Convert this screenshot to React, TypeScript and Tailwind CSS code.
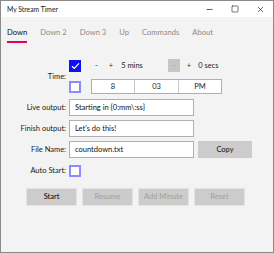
import { FiMinus, FiSquare, FiX } from "react-icons/fi";

const tabs = ["Down", "Down 2", "Down 3", "Up", "Commands", "About"];

const Check = ({ checked }: { checked?: boolean }) => (
    <div
        className={`w-[12px] h-[12px] flex items-center justify-center ${checked ? "bg-[#1010f5]" : "border-2 border-[#8c8cff] bg-white"}`}
    >
        {checked && (
            <svg width="9" height="8" viewBox="0 0 9 8" fill="none">
                <path d="M1 4.2 L3.3 6.4 L8 1.4" stroke="white" strokeWidth="1.2" />
            </svg>
        )}
    </div>
);

const Label = ({ text }: { text: string }) => (
    <div className="w-[66px] shrink-0 text-right pr-[1px] text-[#222] whitespace-nowrap">{text}</div>
);

const TextBox = ({ value }: { value: string }) => (
    <div className="w-[125px] h-[17px] border border-[#b0b0b0] bg-white flex items-center pl-[5px] text-[#111] whitespace-nowrap">
        {value}
    </div>
);

const Btn = ({ text, enabled }: { text: string; enabled?: boolean }) => (
    <div
        className={`w-[51px] h-[18px] bg-[#cccccc] border border-[#e2e2e2] flex items-center justify-center whitespace-nowrap ${enabled ? "text-black" : "text-[#a0a0a0]"}`}
    >
        {text}
    </div>
);

const App = () => {
    return (
        <div
            className="w-[274px] h-[253px] border border-[#8a8a8a] bg-[#f3f3f3] flex flex-col text-[7.5px] leading-[10px]"
            style={{ fontFamily: "Lato, 'Noto Sans', sans-serif" }}
        >
            {/* title bar */}
            <div className="h-[16px] bg-white flex items-center shrink-0">
                <div className="pl-[6px] text-[6.8px] text-[#222]">My Stream Timer</div>
                <div className="ml-auto flex items-center text-[#333]">
                    <FiMinus className="w-[9px] h-[9px] mr-[17px]" />
                    <FiSquare className="w-[8px] h-[8px] mr-[17px]" />
                    <FiX className="w-[9px] h-[9px] mr-[8px]" />
                </div>
            </div>

            {/* tabs */}
            <div className="flex pl-[6px] pt-[9px] text-[7.6px] leading-[12px]">
                {tabs.map((t, i) => (
                    <div key={t} className="flex flex-col mr-[13px]">
                        <span className={i === 0 ? "text-[#111]" : "text-[#8a8a8a]"}>{t}</span>
                        <div className={`mt-[3px] h-[2px] ${i === 0 ? "bg-[#e6005c]" : ""}`} />
                    </div>
                ))}
            </div>

            {/* time rows */}
            <div className="flex items-center mt-[16px]">
                <Label text="Time:" />
                <div className="ml-[2px] flex flex-col">
                    <div className="flex items-center h-[13px]">
                        <Check checked />
                        <span className="ml-[14px] text-[#333]">-</span>
                        <span className="ml-[11px] text-[#333]">+</span>
                        <span className="ml-[8px] text-[#222]">5 mins</span>
                        <div className="ml-[25px] w-[12px] h-[13px] bg-[#c6c6c6] flex items-center justify-center text-[#999]">-</div>
                        <span className="ml-[7px] text-[#333]">+</span>
                        <span className="ml-[7px] text-[#222]">0 secs</span>
                    </div>
                    <div className="flex items-center mt-[7px]">
                        <Check />
                        <div className="ml-[10px] w-[131px] h-[15px] border border-[#b0b0b0] bg-white flex text-[#222]">
                            <div className="w-[43px] border-r border-[#c8c8c8] flex items-center justify-center">8</div>
                            <div className="w-[44px] border-r border-[#c8c8c8] flex items-center justify-center">03</div>
                            <div className="flex-1 flex items-center justify-center">PM</div>
                        </div>
                    </div>
                </div>
            </div>

            {/* outputs */}
            <div className="flex flex-col gap-[4px] mt-[5px]">
                <div className="flex items-center">
                    <Label text="Live output:" />
                    <div className="ml-[2px]"><TextBox value="Starting in {0:mm\:ss}" /></div>
                </div>
                <div className="flex items-center">
                    <Label text="Finish output:" />
                    <div className="ml-[2px]"><TextBox value="Let's do this!" /></div>
                </div>
                <div className="flex items-center">
                    <Label text="File Name:" />
                    <div className="ml-[2px]"><TextBox value="countdown.txt" /></div>
                    <div className="ml-[4px] w-[54px] h-[17px] bg-[#cccccc] flex items-center justify-center text-[#111]">Copy</div>
                </div>
                <div className="flex items-center mt-[3px]">
                    <Label text="Auto Start:" />
                    <div className="ml-[2px]"><Check /></div>
                </div>
            </div>

            {/* buttons */}
            <div className="flex gap-[5px] ml-[25px] mt-[11px]">
                <Btn text="Start" enabled />
                <Btn text="Resume" />
                <Btn text="Add Minute" />
                <Btn text="Reset" />
            </div>
        </div>
    );
};

export default App;
